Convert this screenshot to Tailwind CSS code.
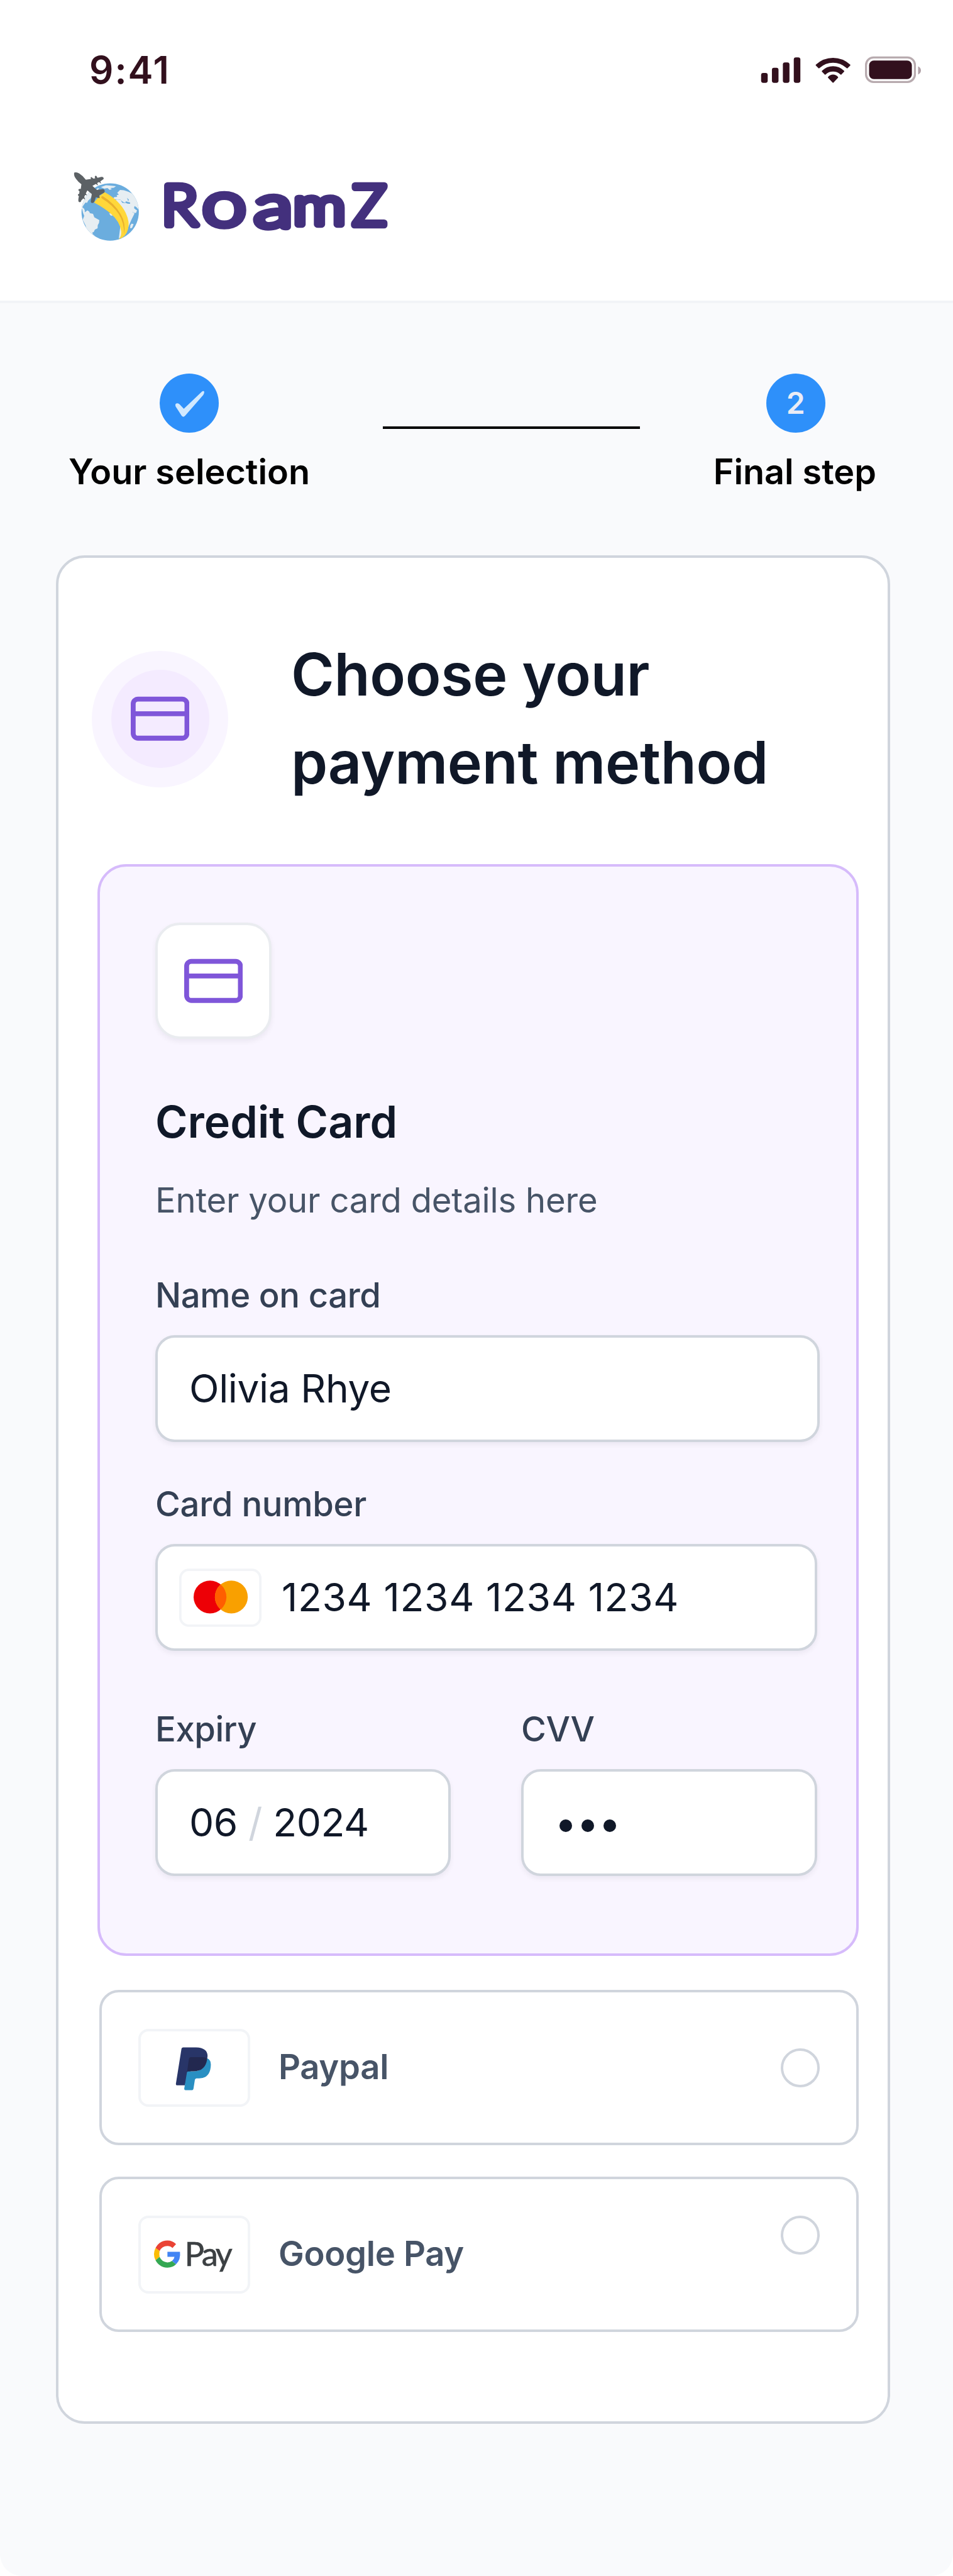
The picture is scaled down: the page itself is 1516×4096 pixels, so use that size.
<!DOCTYPE html>
<html lang="en">
<head>
<meta charset="utf-8">
<title>RoamZ – Payment</title>
<script src="https://cdn.jsdelivr.net/npm/@tailwindcss/browser@4"></script>
</head>
<body class="bg-white">
<div class="w-[1516px] h-[4096px] overflow-hidden rounded-b-[35px] bg-[#f9fafc] font-['Inter',sans-serif] text-[54.4px] leading-[78px] text-[#101828]">

  <header class="h-[482px] bg-white border-b-4 border-[#f2f4f7]">
    <div class="flex justify-between pt-[72px] pl-[142px] pr-[51px]">
      <span class="text-[60px] tracking-[2px] font-semibold text-[#32101d]">9:41</span>
      <svg class="w-[255px] h-[46px] mt-[17px]" viewBox="1620 119 341 61.5" fill="#32101d">
        <rect x="1621" y="155" width="14" height="21" rx="4.5"/><rect x="1644" y="144" width="14" height="32" rx="4.5"/><rect x="1667.3" y="132.7" width="14" height="43.3" rx="4.5"/><rect x="1690.5" y="122" width="14" height="54" rx="4.5"/>
        <path d="M1737.5 137.5Q1736.5 138.5 1737.500 139.500L1742.500 144.500Q1744 146 1745.500 144.500Q1758 133.500 1774 133.500T1802.500 144.500Q1804 146 1805.500 144.500L1810.500 139.500Q1811.500 138.500 1810.500 137.500Q1795 123 1774 123T1737.500 137.500Z"/>
        <path d="M1750.500 150.500Q1749.500 151.500 1750.500 152.500L1756 158Q1757 159.500 1758.500 158Q1765 152 1774 152T1789.500 158Q1791 159.500 1792 158L1797.500 152.500Q1798.500 151.500 1797.500 150.500Q1787.500 140.700 1774 140.700T1750.500 150.500Z"/>
        <path d="M1763.500 163.500Q1762.500 164.500 1763.500 165.500L1773 175.500Q1774 176.500 1775 175.500L1784.500 165.500Q1785.500 164.500 1784.500 163.500Q1780 158.500 1774 158.500T1763.500 163.500Z"/>
        <rect x="1844.200" y="122.200" width="104" height="52" rx="16" fill="none" stroke="#b8abaf" stroke-width="4.400"/>
        <rect x="1850.700" y="128.700" width="91" height="39.300" rx="10"/>
        <path d="M1955 141Q1961 144 1961 149.700T1955 158.500Z" fill="#b0a1a7"/>
      </svg>
    </div>
    <div class="flex items-start mt-[112px] ml-[104px]">
      <svg class="w-[135px] h-[135px]" viewBox="0 0 540 540">
        <defs><clipPath id="globe"><circle cx="285" cy="300" r="182.500"/></clipPath></defs>
        <circle cx="285" cy="300" r="182.500" fill="#6badde"/>
        <g clip-path="url(#globe)" fill="#e7eef2">
          <path d="M90 240L150 160L172 190L160 214L145 228L138 242L128 240L112 262L108 274L118 286L124 300L118 310L124 290L110 276L100 290Z"/>
          <path d="M104 268L120 280L124 302L140 290L152 298L156 308L176 312L184 334L216 352L214 370L206 384L205 404L188 412L180 428L172 430L174 442L188 452L160 446L134 405L128 385L110 350L120 325L112 305Z"/>
          <path d="M226 142L258 130L322 136L308 146L285 148L296 154L282 160L268 148L248 152Z M194 162L204 149L216 150L206 160Z"/>
          <path d="M330 178L348 160L372 162L402 172L440 190L490 260L480 300L452 270L440 262L437 276L446 284L456 290L450 306L434 306L420 284L414 266L412 256L426 290L430 304L440 310L420 350L390 420L340 470L350 390L300 240L326 220L304 218L310 206L330 204L326 194L340 190Z"/>
          <path d="M414 384L422 374L434 378L424 402L412 404Z"/>
          <path d="M278 310L290 324L302 322L292 308Z M348 388L354 440L362 420Z"/>
        </g>
        <path d="M316 224L350 222L362 242L382 244L384 232L412 240L412 248L398 248L370 238L350 224Z M392 210L404 222L400 232Z" fill="#6badde"/>
        <path d="M250 174Q344 226 384 306Q412 366 398 412Q386 458 340 474Q358 452 355 422Q346 360 290 312Q250 276 182 240L215 200Z" fill="#ffd73a"/>
        <path d="M228 206Q230 196 242 202Q312 246 352 314Q386 372 374 442Q374 366 340 314Q302 256 232 214Z" fill="#e9b02e"/>
        <path d="M56 50Q70 44 88 55Q112 70 130 95L164 90Q156 82 166 78L178 88L190 86Q182 74 194 69Q200 72 204 83L228 77Q242 75 244 86Q244 92 236 96L222 106L228 120L214 110L202 116L208 132L194 122L172 134L200 160L240 155Q252 158 250 172L246 178L216 194L218 212L206 210L194 206L184 236Q178 246 166 242Q160 238 162 230L168 186L140 163L130 182L138 194L126 192L120 204L126 222L114 214L102 226L98 236Q90 240 84 234Q80 226 86 200Q78 196 80 188L88 184L90 168Q80 164 84 156Q90 152 98 154L102 124Q80 108 68 90Q52 70 56 50Z" fill="#5c6165"/>
      </svg>
      <svg class="w-[389px] h-[150px] -mt-[8px] ml-[8px] font-['Lato',sans-serif] font-light" viewBox="330 340 520 200" fill="#43307d" stroke="#43307d" stroke-width="14" stroke-linejoin="round">
        <text transform="translate(343 479) scale(1.080 1)" font-size="118">R</text>
        <text transform="translate(430 479.500) scale(1.270 1)" font-size="132">o</text>
        <text transform="translate(540 483) scale(1.340 1)" font-size="127">a</text>
        <text transform="translate(623 478) scale(1.230 1)" font-size="113">m</text>
        <text transform="translate(749 479) scale(1.030 1)" font-size="118">Z</text>
      </svg>
    </div>
  </header>

  <main>
    <div class="flex justify-between pt-[112px] pl-[109px] pr-[122px] text-[55.700px] font-semibold text-black">
      <div class="flex flex-col items-center gap-[23px]">
        <svg class="size-[94px]" viewBox="340 795 126 126"><circle cx="403" cy="858" r="63" fill="#2e90fa"/><path d="M374 865Q372 859 377 858.500Q380 858 383 861L391.500 870L430 833.500Q434 830.500 435 834Q435.500 837 433 840.500L394 885Q390.500 889 387 885Z" fill="#d1e9ff"/></svg>
        <span>Your selection</span>
      </div>
      <div class="w-[409px] h-1 mt-[84px] bg-black"></div>
      <div class="flex flex-col items-center gap-[23px]">
        <div class="size-[94px] ml-[3px] rounded-full bg-[#2e90fa] flex items-center justify-center text-[48px] text-[#eaecf5]">2</div>
        <span>Final step</span>
      </div>
    </div>

    <section class="ml-[89px] mt-[94px] w-[1327px] h-[2971px] rounded-[46px] border-4 border-[#d0d5dd] bg-white">
      <div class="flex items-center pt-[116px] pl-[53px]">
        <div class="size-[217px] rounded-full bg-[#f9f5ff] flex items-center justify-center">
          <div class="size-[156px] rounded-full bg-[#f4ebff] flex items-center justify-center">
            <svg class="size-[93.300px]" viewBox="0 0 24 24" fill="none" stroke="#7f56d9" stroke-width="2" stroke-linejoin="round"><rect x="1" y="4" width="22" height="16" rx="2"/><path d="M1 10H23"/></svg>
          </div>
        </div>
        <h1 class="ml-[100px] text-[93.300px] leading-[140px] tracking-[-0.3px] font-semibold">Choose your<br>payment method</h1>
      </div>

      <div class="ml-[62px] mt-[91px] w-[1211px] h-[1736px] rounded-[46px] border-4 border-[#d6bbfb] bg-[#f9f5ff] pl-[88px] pt-[89px]">
        <div class="size-[185px] rounded-[39px] border-4 border-[#eaecf0] bg-white shadow-[0_4px_8px_rgba(16,24,40,0.06)] flex items-center justify-center">
          <svg class="size-[93.300px]" viewBox="0 0 24 24" fill="none" stroke="#7f56d9" stroke-width="2" stroke-linejoin="round"><rect x="1" y="4" width="22" height="16" rx="2"/><path d="M1 10H23"/></svg>
        </div>
        <h2 class="mt-[78px] text-[70px] leading-[108px] font-semibold">Credit Card</h2>
        <p class="mt-[31px] tracking-[-0.2px] text-[#475467]">Enter your card details here</p>

        <div class="mt-[73px] tracking-[-0.4px] font-medium text-[#344054]">Name on card</div>
        <div class="mt-[25px] w-[1057px] h-[170px] rounded-[31px] border-4 border-[#d0d5dd] bg-white shadow-[0_4px_8px_rgba(16,24,40,0.06)] flex items-center pl-[50px] text-[62.200px] tracking-[-0.4px]">Olivia Rhye</div>

        <div class="mt-[59px] tracking-[-0.3px] font-medium text-[#344054]">Card number</div>
        <div class="mt-[25px] w-[1053px] h-[170px] rounded-[31px] border-4 border-[#d0d5dd] bg-white shadow-[0_4px_8px_rgba(16,24,40,0.06)] flex items-center pl-[34px] text-[62.200px]">
          <svg class="w-[131px] h-[93px]" viewBox="382 3336.700 175.500 123.800"><rect x="384.500" y="3339.200" width="170.500" height="118.800" rx="18" fill="#fff" stroke="#f2f4f7" stroke-width="5"/><circle cx="447.800" cy="3397" r="35" fill="#ed0006"/><circle cx="493.200" cy="3397" r="35" fill="#f9a000"/><path d="M470.500 3370.400A35 35 0 0 1 470.500 3423.600A35 35 0 0 1 470.500 3370.400Z" fill="#ff5e00"/></svg>
          <span class="ml-[32px] tracking-[0.650px]">1234 1234 1234 1234</span>
        </div>

        <div class="flex gap-[112px] mt-[85px]">
          <div>
            <div class="tracking-[-0.4px] font-medium text-[#344054]">Expiry</div>
            <div class="mt-[25px] w-[470px] h-[170px] rounded-[31px] border-4 border-[#d0d5dd] bg-white shadow-[0_4px_8px_rgba(16,24,40,0.06)] flex items-center pl-[50px] text-[62.200px] tracking-[-0.4px] whitespace-pre">06 <span class="text-[#d0d5dd]">/</span> 2024</div>
          </div>
          <div>
            <div class="tracking-[-0.4px] font-medium text-[#344054]">CVV</div>
            <div class="mt-[25px] w-[471px] h-[170px] rounded-[31px] border-4 border-[#d0d5dd] bg-white shadow-[0_4px_8px_rgba(16,24,40,0.06)] flex items-center gap-[15px] pl-[57px] pt-[9px]">
              <i class="size-[20px] rounded-full bg-[#101828]"></i><i class="size-[20px] rounded-full bg-[#101828]"></i><i class="size-[20px] rounded-full bg-[#101828]"></i>
            </div>
          </div>
        </div>
      </div>

      <div class="flex flex-col gap-[50px] mt-[54px] ml-[65px] w-[1208px] tracking-[-0.3px] font-semibold text-[#475467]">
        <div class="h-[247px] rounded-[31px] border-4 border-[#d0d5dd] flex items-center pl-[58px] pr-[58px]">
          <div class="w-[178px] h-[124px] rounded-[16px] border-4 border-[#f2f4f7]">
            <svg class="w-[170px] h-[116px]" viewBox="57 56 682 404" preserveAspectRatio="none">
              <path d="M316 155Q318 145 328 145H410Q482 147 483 192L481 206L355 290L339 355H287Q280 354 281 346Z" fill="#283568"/>
              <path d="M480 205Q504 214 504 240Q502 316 430 316H412Q404 317 402 324L393 374Q391 382 384 382H341Q334 381 334 374L351 285Q353 277 362 277H395Q470 275 480 205Z" fill="#298fc2"/>
              <path d="M364 208Q366 199 376 199H450Q468 199 481 206Q472 277 395 277H353Z" fill="#22284f"/>
            </svg>
          </div>
          <span class="ml-[45px] mb-[4px]">Paypal</span>
          <span class="ml-auto size-[62px] rounded-full border-4 border-[#d0d5dd]"></span>
        </div>
        <div class="h-[247px] rounded-[31px] border-4 border-[#d0d5dd] flex items-center pl-[58px] pr-[58px]">
          <div class="w-[178px] h-[124px] rounded-[16px] border-4 border-[#f2f4f7]">
            <svg class="w-[170px] h-[116px] font-['Lato',sans-serif]" viewBox="4 4 170 116">
              <g transform="scale(.2492 .2861) translate(-42 -1080)">
                <path d="M152 1260Q178 1218 228 1218Q260 1218 283 1238L260 1260Q247 1249 228 1249Q193 1249 178 1277Z" fill="#ea4335"/>
                <path d="M152 1260Q132 1294 152 1328L178 1309Q174 1294 178 1277Z" fill="#fbbc04"/>
                <path d="M152 1328Q178 1369 228 1369Q262 1369 283 1350L257 1332Q245 1340 228 1340Q192 1338 178 1309Z" fill="#34a853"/>
                <path d="M228 1281H308Q314 1325 283 1350L257 1332Q270 1324 273 1309H228Z" fill="#4285f4"/>
              </g>
              <text x="73.500" y="80.400" font-size="52.500" font-weight="400" fill="#3c4043" stroke="#3c4043" stroke-width="0.600" textLength="76" lengthAdjust="spacing">Pay</text>
            </svg>
          </div>
          <span class="ml-[45px] mb-[4px]">Google Pay</span>
          <span class="ml-auto mb-[62px] size-[62px] rounded-full border-4 border-[#d0d5dd]"></span>
        </div>
      </div>
    </section>
  </main>
</div>
</body>
</html>
